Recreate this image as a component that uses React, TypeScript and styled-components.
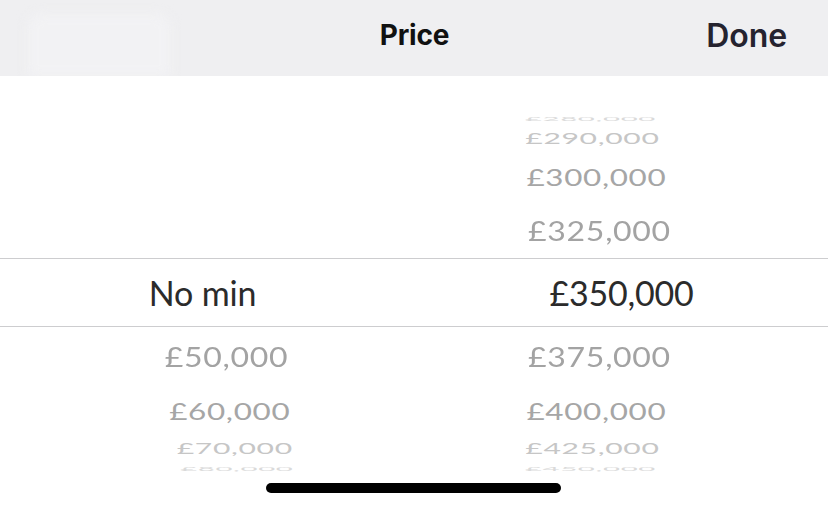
import React from 'react';
import styled, { createGlobalStyle } from 'styled-components';

interface WheelRow {
  offset: number;
  height: number;
  scaleY: number;
  scaleX: number;
  color: string;
  shiftLeft: number;
  shiftRight: number;
}

const minOptions = ['No min', '£50,000', '£60,000', '£70,000', '£80,000'];
const maxOptions = [
  '£280,000', '£290,000', '£300,000', '£325,000', '£350,000',
  '£375,000', '£400,000', '£425,000', '£450,000',
];
const minIndex = 0;
const maxIndex = 4;

// rows of the wheel, from the top edge to the bottom edge
const wheel: WheelRow[] = [
  { offset: -4, height: 18, scaleY: 0.18, scaleX: 0.92, color: '#dadada', shiftLeft: 10, shiftRight: -9 },
  { offset: -3, height: 22, scaleY: 0.45, scaleX: 0.94, color: '#c6c6c6', shiftLeft: 8, shiftRight: -7 },
  { offset: -2, height: 54, scaleY: 0.72, scaleX: 0.98, color: '#a6a6a6', shiftLeft: 3, shiftRight: -3 },
  { offset: -1, height: 54, scaleY: 0.84, scaleX: 1, color: '#a3a3a3', shiftLeft: 0, shiftRight: 0 },
  { offset: 0, height: 69, scaleY: 1, scaleX: 1, color: '#2b2b2b', shiftLeft: -24, shiftRight: 22 },
  { offset: 1, height: 60, scaleY: 0.84, scaleX: 1, color: '#a3a3a3', shiftLeft: 0, shiftRight: 0 },
  { offset: 2, height: 47, scaleY: 0.72, scaleX: 0.98, color: '#a6a6a6', shiftLeft: 3, shiftRight: -3 },
  { offset: 3, height: 30, scaleY: 0.45, scaleX: 0.94, color: '#c6c6c6', shiftLeft: 8, shiftRight: -7 },
  { offset: 4, height: 10, scaleY: 0.18, scaleX: 0.92, color: '#dadada', shiftLeft: 10, shiftRight: -9 },
];

const App: React.FC = () => (
  <>
    <GlobalStyle />
    <Screen>
      <Header>
        <GhostButton />
        <Title>Price</Title>
        <DoneButton>Done</DoneButton>
      </Header>
      <Picker>
        {wheel.map((row) => {
          const left = minOptions[minIndex + row.offset];
          const right = maxOptions[maxIndex + row.offset];
          const selected = row.offset === 0;
          return (
            <Row key={row.offset} $height={row.height} $selected={selected}>
              <Cell>
                {left && (
                  <Label
                    $color={row.color}
                    $selected={selected}
                    style={{ transform: `translateX(${row.shiftLeft}px) scale(${row.scaleX}, ${row.scaleY})` }}
                  >
                    {left}
                  </Label>
                )}
              </Cell>
              <Cell>
                {right && (
                  <Label
                    $color={row.color}
                    $selected={selected}
                    style={{ transform: `translateX(${row.shiftRight}px) scale(${row.scaleX}, ${row.scaleY})` }}
                  >
                    {right}
                  </Label>
                )}
              </Cell>
            </Row>
          );
        })}
      </Picker>
      <HomeIndicator />
    </Screen>
  </>
);

const GlobalStyle = createGlobalStyle`
  html, body {
    margin: 0;
    padding: 0;
    background: #ffffff;
  }
  body {
    font-family: Lato, "Noto Sans", sans-serif;
  }
`;

const Screen = styled.div`
  width: 828px;
  height: 509px;
  overflow: hidden;
  display: flex;
  flex-direction: column;
  background: #ffffff;
`;

const Header = styled.div`
  height: 76px;
  flex: 0 0 auto;
  background: #efeff1;
  display: grid;
  grid-template-columns: 1fr auto 1fr;
  align-items: center;
  padding: 0 41px 6px 41px;
  box-sizing: border-box;
  overflow: hidden;
`;

const GhostButton = styled.div`
  justify-self: start;
  align-self: end;
  width: 142px;
  height: 62px;
  margin: 0 0 -6px -13px;
  border-radius: 12px 12px 0 0;
  background: #f2f2f4;
  filter: blur(6px);
`;

const Title = styled.div`
  font-family: Inter, "Noto Sans", sans-serif;
  font-weight: 700;
  font-size: 28px;
  color: #111111;
  letter-spacing: -0.2px;
  margin-left: 1px;
`;

const DoneButton = styled.div`
  justify-self: end;
  font-family: Inter, "Noto Sans", sans-serif;
  font-weight: 600;
  font-size: 32px;
  color: #25232f;
  letter-spacing: -0.1px;
`;

const Picker = styled.div`
  margin-top: 34px;
  height: 362px;
  flex: 0 0 auto;
  overflow: hidden;
  display: flex;
  flex-direction: column;
`;

const Row = styled.div<{ $height: number; $selected: boolean }>`
  flex: 0 0 auto;
  height: ${({ $height }) => $height}px;
  display: grid;
  grid-template-columns: 1fr 1fr;
  grid-template-rows: minmax(0, 1fr);
  padding: 0 42px 0 40px;
  box-sizing: border-box;
  border-top: ${({ $selected }) => ($selected ? '1px solid #cdcdcf' : 'none')};
  border-bottom: ${({ $selected }) => ($selected ? '1px solid #cdcdcf' : 'none')};
`;

const Cell = styled.div`
  display: flex;
  justify-content: center;
  align-items: center;
  min-height: 0;
  overflow: visible;
`;

const Label = styled.span<{ $color: string; $selected: boolean }>`
  display: inline-block;
  flex: 0 0 auto;
  font-family: Lato, "Noto Sans", sans-serif;
  font-size: ${({ $selected }) => ($selected ? '34px' : '32px')};
  letter-spacing: ${({ $selected }) => ($selected ? '-0.2px' : '0.7px')};
  line-height: 1;
  color: ${({ $color }) => $color};
  white-space: nowrap;
  transform-origin: center center;
`;

const HomeIndicator = styled.div`
  align-self: center;
  margin-top: 11px;
  margin-left: -1px;
  width: 295px;
  height: 10px;
  border-radius: 5px;
  background: #000000;
`;

export default App;
